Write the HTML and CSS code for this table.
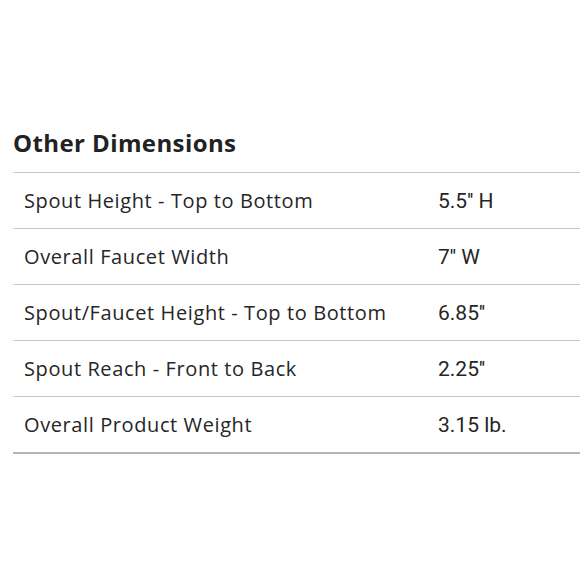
FILE: index.html
```html
<!DOCTYPE html>
<html>
<head>
<meta charset="utf-8">
<link rel="stylesheet" href="styles.css">
</head>
<body>
<section class="dims">
  <h2 class="dims-title">Other Dimensions</h2>
  <div class="dims-table">
    <div class="row"><span class="label">Spout Height - Top to Bottom</span><span class="value">5.5'' H</span></div>
    <div class="row"><span class="label">Overall Faucet Width</span><span class="value">7'' W</span></div>
    <div class="row"><span class="label">Spout/Faucet Height - Top to Bottom</span><span class="value">6.85''</span></div>
    <div class="row"><span class="label">Spout Reach - Front to Back</span><span class="value">2.25''</span></div>
    <div class="row"><span class="label">Overall Product Weight</span><span class="value">3.15 lb.</span></div>
  </div>
</section>
</body>
</html>
```
FILE: styles.css
```css
html, body {
  margin: 0;
  padding: 0;
  background: #fff;
}
.dims {
  padding: 126px 0 0 13px;
  color: #2b2b2b;
}
.dims-title {
  margin: 0 0 12px 0;
  font-family: "Open Sans", sans-serif;
  font-weight: 700;
  font-size: 24px;
  line-height: 34px;
  letter-spacing: 0.4px;
  color: #222;
}
.dims-table {
  border-bottom: 2px solid #b5b5b5;
}
.row {
  display: grid;
  grid-template-columns: 414px 1fr;
  height: 55px;
  align-items: center;
  border-top: 1px solid #c8c8c8;
  padding-left: 11px;
  font-size: 20px;
}
.label {
  font-family: "Open Sans", sans-serif;
  letter-spacing: 0.6px;
  color: #262626;
}
.value {
  font-family: Roboto, "Noto Sans", sans-serif;
  font-size: 21px;
  color: #262626;
}
```
